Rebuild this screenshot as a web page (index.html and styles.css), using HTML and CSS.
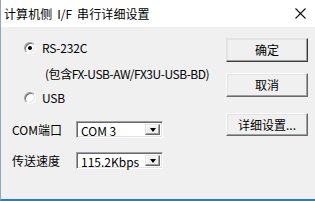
FILE: index.html
```html
<!DOCTYPE html>
<html lang="zh-CN">
<head>
<meta charset="utf-8">
<title>计算机侧 I/F 串行详细设置</title>
<link rel="stylesheet" href="styles.css">
</head>
<body>
<div class="window">
  <div class="titlebar">
    <span class="title">计算机侧 I/F 串行详细设置</span>
    <span class="close"><svg width="11" height="11" viewBox="0 0 11 11"><path d="M0.5 0.5 L10.5 10.5 M10.5 0.5 L0.5 10.5" stroke="#111" stroke-width="1.1" fill="none"/></svg></span>
  </div>
  <div class="content">
    <div class="left">
      <div class="radio-row first"><span class="radio checked"></span><span class="rtext">RS-232C</span></div>
      <div class="note">(包含FX-USB-AW/FX3U-USB-BD)</div>
      <div class="radio-row second"><span class="radio"></span><span class="rtext">USB</span></div>
      <div class="field f1">
        <span class="label">COM端口</span>
        <div class="select"><span class="value">COM 3</span><span class="arrow"><span class="tri"></span></span></div>
      </div>
      <div class="field f2">
        <span class="label">传送速度</span>
        <div class="select"><span class="value">115.2Kbps</span><span class="arrow"><span class="tri"></span></span></div>
      </div>
    </div>
    <div class="right">
      <button class="btn ok">确定</button>
      <button class="btn cancel">取消</button>
      <button class="btn detail">详细设置...</button>
    </div>
  </div>
</div>
</body>
</html>
```

FILE: styles.css
```css
html, body {
  margin: 0;
  padding: 0;
  background: #f0f0f0;
}
body {
  font-family: "Noto Sans CJK SC", "Noto Sans", sans-serif;
  font-size: 12px;
  color: #000;
}
.window {
  width: 315px;
  height: 201px;
  display: flex;
  flex-direction: column;
  box-sizing: border-box;
  border-left: 1px solid #8ea6c4;
  border-bottom: 2px solid #2f7bbf;
  background: #f0f0f0;
}
.titlebar {
  height: 27px;
  background: #fff;
  display: flex;
  align-items: center;
  justify-content: space-between;
  padding: 0 9px 0 3px;
  flex: none;
}
.title {
  font-size: 12px;
  line-height: 27px;
  letter-spacing: 0.1px;
  word-spacing: 2px;
}
.close {
  display: flex;
  align-items: center;
}
.content {
  flex: 1;
  display: grid;
  grid-template-columns: 1fr 82px;
  padding-right: 7px;
}
.left {
  display: flex;
  flex-direction: column;
}
.radio-row {
  display: flex;
  align-items: center;
  height: 16px;
  padding-left: 23px;
}
.radio-row.first { margin-top: 13px; }
.radio-row.second { margin-top: 8px; }
.radio {
  width: 12px;
  height: 12px;
  box-sizing: border-box;
  border-radius: 50%;
  border: 1px solid;
  border-color: #a0a0a0 #fff #fff #a0a0a0;
  box-shadow: inset 1px 1px #696969, inset -1px -1px #e3e3e3;
  background: #fff;
  position: relative;
  flex: none;
}
.radio.checked::after {
  content: "";
  position: absolute;
  left: 3px;
  top: 3px;
  width: 4px;
  height: 4px;
  border-radius: 50%;
  background: #000;
}
.rtext {
  margin-left: 6px;
  line-height: 16px;
  letter-spacing: -0.2px;
}
.note {
  margin-top: 10px;
  padding-left: 44px;
  height: 16px;
  line-height: 16px;
  white-space: nowrap;
  letter-spacing: -0.45px;
}
.field {
  display: flex;
  align-items: center;
  height: 17px;
  padding-left: 11px;
}
.field.f1 { margin-top: 15px; }
.field.f2 { margin-top: 14px; }
.label {
  width: 64px;
  flex: none;
  line-height: 17px;
}
.select {
  width: 87px;
  height: 17px;
  box-sizing: border-box;
  border: 1px solid;
  border-color: #a0a0a0 #fff #fff #a0a0a0;
  box-shadow: inset 1px 1px #696969, inset -1px -1px #e3e3e3;
  background: #fff;
  display: flex;
  align-items: stretch;
  padding: 2px 2px 2px 2px;
}
.value {
  flex: 1;
  line-height: 13px;
  padding-left: 2px;
}
.arrow {
  width: 15px;
  box-sizing: border-box;
  border: 1px solid;
  border-color: #e3e3e3 #696969 #696969 #e3e3e3;
  box-shadow: inset -1px -1px #a0a0a0, inset 1px 1px #fff;
  background: #f0f0f0;
  display: flex;
  align-items: center;
  justify-content: center;
}
.tri {
  width: 0;
  height: 0;
  border-left: 3.5px solid transparent;
  border-right: 3.5px solid transparent;
  border-top: 4px solid #000;
  margin-top: 1px;
}
.right {
  display: flex;
  flex-direction: column;
  padding-top: 11px;
}
.btn {
  font-family: "Noto Sans CJK SC", "Noto Sans", sans-serif;
  font-size: 12px;
  color: #000;
  background: #f0f0f0;
  border: 1px solid;
  border-color: #fff #696969 #696969 #fff;
  box-shadow: inset -1px -1px #a0a0a0, inset 1px 1px #e3e3e3;
  height: 24px;
  width: 82px;
  padding: 0;
  margin: 0;
  line-height: 20px;
}
.btn.ok { border-color: #e3e3e3 #3c3c3c #3c3c3c #e3e3e3; }
.btn.cancel { margin-top: 11px; }
.btn.detail { margin-top: 16px; height: 23px; }
```
